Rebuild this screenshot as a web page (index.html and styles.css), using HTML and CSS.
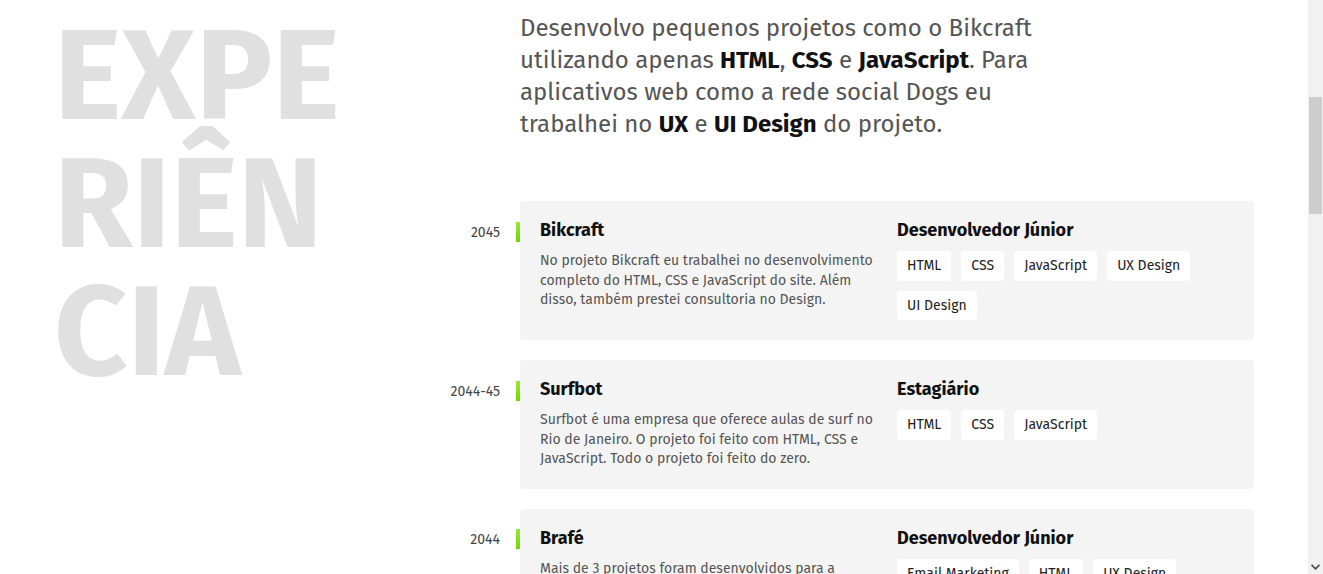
FILE: index.html
```html
<!DOCTYPE html>
<html lang="pt-BR">
<head>
<meta charset="utf-8">
<title>Experiência</title>
<link rel="stylesheet" href="styles.css">
</head>
<body>
<div class="viewport">
  <div class="page">
    <h1 class="big-title">EXPE<br>RIÊN<br>CIA</h1>
    <div class="content">
      <p class="intro">Desenvolvo pequenos projetos como o Bikcraft utilizando apenas <strong>HTML</strong>, <strong>CSS</strong> e <strong>JavaScript</strong>. Para aplicativos web como a rede social Dogs eu trabalhei no <strong>UX</strong> e <strong>UI Design</strong> do projeto.</p>
      <ul class="timeline">
        <li class="item">
          <div class="year"><span>2045</span><i class="bar"></i></div>
          <div class="card">
            <div class="col">
              <h2 class="card-title">Bikcraft</h2>
              <p class="desc">No projeto Bikcraft eu trabalhei no desenvolvimento completo do HTML, CSS e JavaScript do site. Além disso, também prestei consultoria no Design.</p>
            </div>
            <div class="col">
              <h3 class="card-title">Desenvolvedor Júnior</h3>
              <ul class="tags">
                <li>HTML</li><li>CSS</li><li>JavaScript</li><li>UX Design</li><li>UI Design</li>
              </ul>
            </div>
          </div>
        </li>
        <li class="item">
          <div class="year"><span>2044-45</span><i class="bar"></i></div>
          <div class="card">
            <div class="col">
              <h2 class="card-title">Surfbot</h2>
              <p class="desc">Surfbot é uma empresa que oferece aulas de surf no Rio de Janeiro. O projeto foi feito com HTML, CSS e JavaScript. Todo o projeto foi feito do zero.</p>
            </div>
            <div class="col">
              <h3 class="card-title">Estagiário</h3>
              <ul class="tags">
                <li>HTML</li><li>CSS</li><li>JavaScript</li>
              </ul>
            </div>
          </div>
        </li>
        <li class="item">
          <div class="year"><span>2044</span><i class="bar"></i></div>
          <div class="card">
            <div class="col">
              <h2 class="card-title">Brafé</h2>
              <p class="desc">Mais de 3 projetos foram desenvolvidos para a empresa Brafé, com foco em Email Marketing, HTML e UX Design.</p>
            </div>
            <div class="col">
              <h3 class="card-title">Desenvolvedor Júnior</h3>
              <ul class="tags">
                <li>Email Marketing</li><li>HTML</li><li>UX Design</li>
              </ul>
            </div>
          </div>
        </li>
      </ul>
    </div>
  </div>
</div>
<div class="scrollbar">
  <div class="track">
    <div class="thumb"></div>
  </div>
  <div class="arrow">
    <svg width="9" height="6" viewBox="0 0 9 6"><path d="M0.5 0.8 L4.5 4.8 L8.5 0.8" fill="none" stroke="#505050" stroke-width="1.8"/></svg>
  </div>
</div>
</body>
</html>
```
FILE: styles.css
```css
* { box-sizing: border-box; }

html, body {
  margin: 0;
  padding: 0;
  height: 100%;
}

body {
  display: flex;
  overflow: hidden;
  background: #fff;
  font-family: "Fira Sans", "Lato", "Noto Sans", sans-serif;
  color: #555;
}

.viewport {
  flex: 1;
  min-width: 0;
  overflow: hidden;
}

.page {
  max-width: 1200px;
  margin: 0 auto;
  padding-top: 12px;
  display: grid;
  grid-template-columns: 386px 814px;
  align-items: start;
}

.big-title {
  margin: 0;
  padding-left: 0;
  font-size: 128px;
  line-height: 1;
  font-weight: 700;
  color: #e0e0e0;
}

.content {
  min-width: 0;
}

.intro {
  margin: 0 0 61px 80px;
  max-width: 530px;
  font-size: 24px;
  line-height: 32px;
  color: #555;
}

.intro strong {
  color: #111;
  font-weight: 700;
}

.timeline {
  list-style: none;
  margin: 0;
  padding: 0;
  display: flex;
  flex-direction: column;
  gap: 20px;
}

.item {
  display: grid;
  grid-template-columns: 80px 1fr;
  align-items: start;
}

.year {
  margin-top: 21px;
  height: 20px;
  display: flex;
  align-items: center;
  justify-content: flex-end;
  gap: 16px;
  font-size: 14px;
  color: #444;
  white-space: nowrap;
}

.bar {
  display: block;
  width: 4px;
  height: 20px;
  margin-top: -1px;
  background: linear-gradient(#9be83b, #6fd600);
}

.card {
  background: #f4f4f4;
  border-radius: 4px;
  padding: 20px;
  display: grid;
  grid-template-columns: 1fr 1fr;
  gap: 20px;
}

.card-title {
  margin: 0 0 12px;
  font-size: 18px;
  line-height: 1;
  font-weight: 700;
  color: #111;
}

.desc {
  margin: 0;
  font-size: 14px;
  line-height: 1.4;
  color: #555;
}

.tags {
  list-style: none;
  margin: 0;
  padding: 0;
  display: flex;
  flex-wrap: wrap;
  gap: 10px;
}

.tags li {
  background: #fff;
  border-radius: 4px;
  padding: 5px 10px;
  font-size: 14px;
  line-height: 1.4;
  color: #222;
}

.scrollbar {
  width: 15px;
  flex: none;
  background: #f1f1f1;
  display: flex;
  flex-direction: column;
}

.track {
  flex: 1;
  padding-top: 97px;
}

.thumb {
  height: 117px;
  margin: 0 1px 0 1px;
  background: #cdcdcd;
}

.arrow {
  height: 15px;
  display: flex;
  align-items: center;
  justify-content: center;
}
```
